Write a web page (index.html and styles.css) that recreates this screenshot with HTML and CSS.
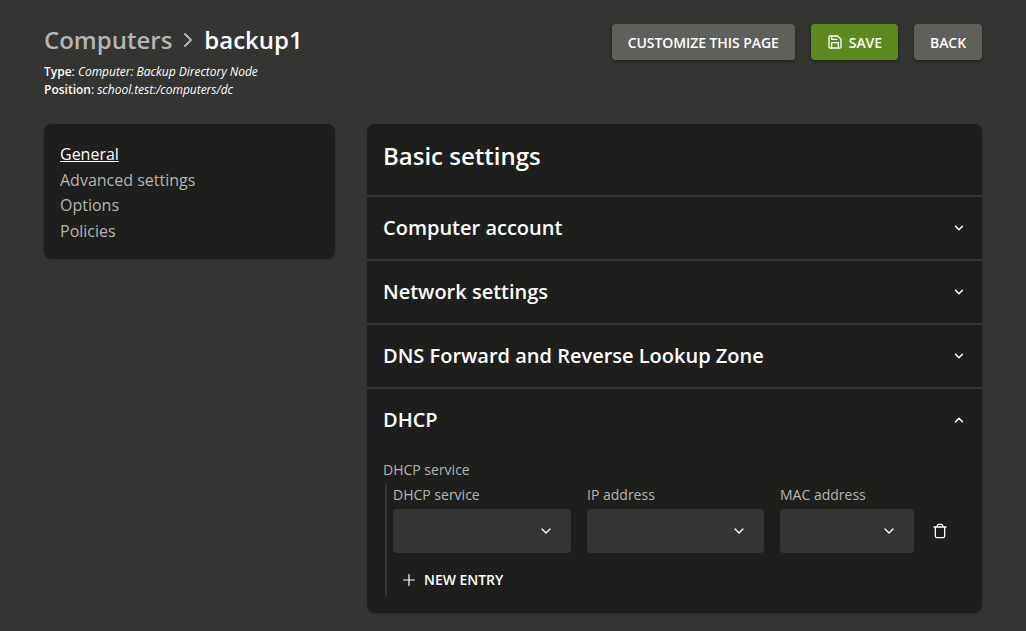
FILE: index.html
```html
<!DOCTYPE html>
<html lang="en">
<head>
<meta charset="utf-8">
<title>backup1</title>
<link rel="stylesheet" href="styles.css">
</head>
<body>
<header class="header">
  <div>
    <h1 class="title"><span class="crumb">Computers</span><svg class="sep" viewBox="0 0 24 24"><path d="M9 6l6 6-6 6"/></svg><span>backup1</span></h1>
    <p class="meta"><b>Type</b>: <i>Computer: Backup Directory Node</i></p>
    <p class="meta"><b>Position</b>: <i>school.test:/computers/dc</i></p>
  </div>
  <div class="actions">
    <button class="btn">CUSTOMIZE THIS PAGE</button>
    <button class="btn primary"><svg class="icon" viewBox="0 0 24 24"><path d="M19 21H5a2 2 0 0 1-2-2V5a2 2 0 0 1 2-2h11l5 5v11a2 2 0 0 1-2 2z"/><path d="M17 21v-8H7v8M7 3v5h8"/></svg>SAVE</button>
    <button class="btn">BACK</button>
  </div>
</header>
<div class="layout">
  <nav class="nav">
    <a class="active">General</a><a>Advanced settings</a><a>Options</a><a>Policies</a>
  </nav>
  <main class="panel">
    <h2 class="heading">Basic settings</h2>
    <section class="row"><h3>Computer account</h3><svg class="chev" viewBox="0 0 24 24"><path d="M6 9l6 6 6-6"/></svg></section>
    <section class="row"><h3>Network settings</h3><svg class="chev" viewBox="0 0 24 24"><path d="M6 9l6 6 6-6"/></svg></section>
    <section class="row"><h3>DNS Forward and Reverse Lookup Zone</h3><svg class="chev" viewBox="0 0 24 24"><path d="M6 9l6 6 6-6"/></svg></section>
    <section class="row"><h3>DHCP</h3><svg class="chev" viewBox="0 0 24 24"><path d="M6 15l6-6 6 6"/></svg></section>
    <div class="content">
      <div class="label">DHCP service</div>
      <div class="group">
        <div class="fields">
          <div class="field wide"><label class="label">DHCP service</label><div class="select"><svg class="icon" viewBox="0 0 24 24"><path d="M6 9l6 6 6-6"/></svg></div></div>
          <div class="field mid"><label class="label">IP address</label><div class="select"><svg class="icon" viewBox="0 0 24 24"><path d="M6 9l6 6 6-6"/></svg></div></div>
          <div class="field narrow"><label class="label">MAC address</label><div class="select"><svg class="icon" viewBox="0 0 24 24"><path d="M6 9l6 6 6-6"/></svg></div></div>
          <svg class="icon trash" viewBox="0 0 24 24"><path d="M3 6h18M19 6v14a2 2 0 0 1-2 2H7a2 2 0 0 1-2-2V6M8 6V4a2 2 0 0 1 2-2h4a2 2 0 0 1 2 2v2"/></svg>
        </div>
        <button class="new"><svg class="icon" viewBox="0 0 24 24"><path d="M12 4v16M4 12h16"/></svg>NEW ENTRY</button>
      </div>
    </div>
  </main>
</div>
</body>
</html>
```
FILE: styles.css
```css
* { box-sizing: border-box; }
body { margin: 0; height: 631px; padding: 24px 44px 0; background: #343432; color: #fff; font-family: "Open Sans", sans-serif; font-size: 16px; }
h1, h2, h3, p { margin: 0; }
svg { display: block; flex: none; fill: none; stroke: currentColor; stroke-width: 2; stroke-linecap: round; stroke-linejoin: round; }
.icon { width: 16px; height: 16px; }
.header { display: flex; justify-content: space-between; height: 100px; }
.title { display: flex; align-items: center; height: 32px; margin-bottom: 7px; font-size: 24px; line-height: 32px; font-weight: 600; }
.crumb { color: #b5b5b3; }
.sep { width: 24px; height: 24px; margin: 0 4px; color: #b5b5b3; }
.meta { font-size: 12px; line-height: 18px; }
.meta b { font-weight: 600; }
.meta i { letter-spacing: -0.02px; }
.actions { display: flex; gap: 16px; height: 36px; }
.btn { display: flex; align-items: center; gap: 6px; padding: 0 16px; border: 0; border-radius: 4px; background: #5f5f5b; color: #fff; font: 600 14px "Open Sans", sans-serif; letter-spacing: -0.07px; box-shadow: 0 2px 4px rgba(0,0,0,.3); }
.primary { background: #5e891e; }
.layout { display: flex; align-items: flex-start; gap: 32px; }
.nav { display: flex; flex-direction: column; width: 291px; padding: 18px 16px 15px; border-radius: 8px; background: #1e1e1d; box-shadow: 0 1px 3px rgba(0,0,0,.2); }
.nav a { color: #b5b5b3; line-height: 25.6px; }
.nav .active { color: #fff; text-decoration: underline; }
.panel { width: 615px; height: 489px; border-radius: 8px; background: #1e1e1d; box-shadow: 0 1px 3px rgba(0,0,0,.2); }
.heading { height: 71px; padding: 16px; font-size: 24px; line-height: 32px; font-weight: 600; }
.row { display: flex; justify-content: space-between; align-items: center; height: 64px; padding: 0 16px; border-top: 2px solid #343432; }
.row h3 { font-size: 20px; line-height: 30px; font-weight: 600; }
.chev { width: 14px; height: 14px; stroke-width: 2.5; }
.content { padding: 9px 16px 0; }
.label { display: block; color: #b5b5b3; font-size: 14px; line-height: 20px; }
.group { margin: 4px 0 0 2px; padding: 1px 0 0 6px; border-left: 2px solid #343432; height: 113px; }
.fields { display: flex; gap: 16px; align-items: flex-end; }
.wide { width: 178px; }
.mid { width: 177px; }
.narrow { width: 134px; }
.select { display: flex; align-items: center; justify-content: flex-end; height: 44px; margin-top: 4px; padding-right: 17px; border-radius: 4px; background: #343432; }
.trash { margin: 0 0 14px 2px; }
.new { display: flex; align-items: center; gap: 7px; margin: 17px 0 0 8px; padding: 0; border: 0; background: none; color: #fff; font: 600 14px/20px "Open Sans", sans-serif; letter-spacing: -0.04px; }
.new .icon { stroke-width: 1.8; }
```
